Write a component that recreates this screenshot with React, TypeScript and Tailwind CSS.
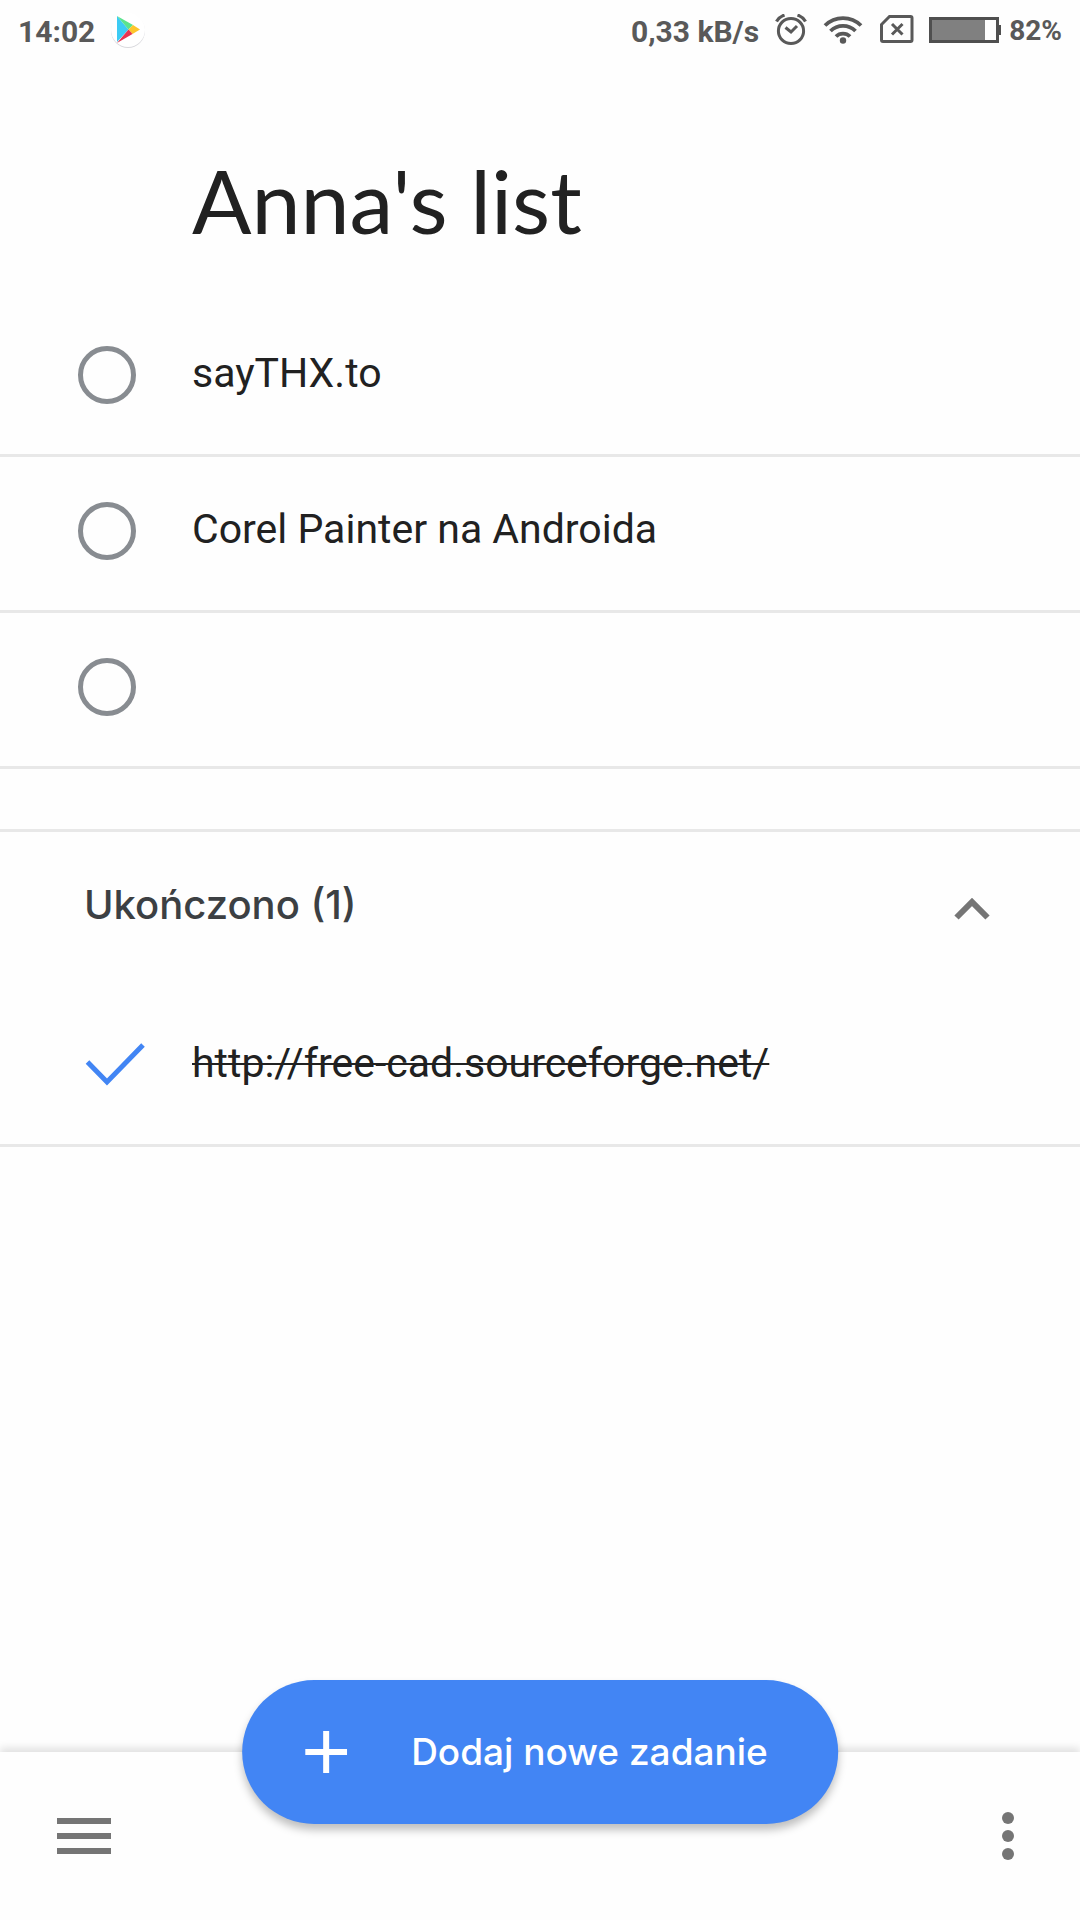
import React, { useState } from "react";

interface Task {
  id: number;
  title: string;
  done: boolean;
}

const initialTasks: Task[] = [
  { id: 1, title: "sayTHX.to", done: false },
  { id: 2, title: "Corel Painter na Androida", done: false },
  { id: 3, title: "", done: false },
  { id: 4, title: "http://free-cad.sourceforge.net/", done: true },
];

const PlayBadge = () => (
  <svg className="w-9 h-9" viewBox="0 0 36 36" aria-hidden="true">
    <circle cx="17" cy="19" r="17" fill="#d9d9dd" />
    <circle cx="17" cy="18" r="17" fill="#fff" />
    <path d="M6 4v26l11.500-12.500z" fill="#3ccbf4" />
    <path d="M6 4l16 9-4.500 4.500z" fill="#5be38d" />
    <path d="M22 13l7 4.500-7.500 4.500-4-4.500z" fill="#fdc52b" />
    <path d="M6 31l15.500-9-4-4.500z" fill="#e8344f" />
  </svg>
);

const AlarmIcon = () => (
  <svg
    className="w-8 h-8"
    viewBox="0 0 32 32"
    fill="none"
    stroke="#595959"
    aria-hidden="true"
  >
    <circle cx="16" cy="17" r="12.600" strokeWidth="3" />
    <path d="M10.500 13.500l5.500 4.500 6-6" strokeWidth="3" />
    <path d="M1.500 7.500Q4 3 9.500 1M30.500 7.500Q28 3 22.500 1" strokeWidth="3.200" />
  </svg>
);

const WifiIcon = () => (
  <svg
    className="w-10 h-8"
    viewBox="0 0 40 32"
    fill="none"
    stroke="#595959"
    strokeWidth="3.800"
    aria-hidden="true"
  >
    <path d="M2 11.500a25.500 25.500 0 0 1 36 0" />
    <path d="M7.500 17a17.700 17.700 0 0 1 25 0" />
    <path d="M13 22.500a10 10 0 0 1 14 0" />
    <circle cx="20" cy="26.500" r="3.200" fill="#595959" stroke="none" />
  </svg>
);

const NoSimIcon = () => (
  <svg
    className="w-9 h-8"
    viewBox="0 0 36 32"
    fill="none"
    stroke="#595959"
    strokeWidth="3"
    aria-hidden="true"
  >
    <path d="M10.500 2.500H31.500q1.500 0 1.500 1.500V26q0 1.500-1.500 1.500H4q-1.500 0-1.500-1.500V10.500z" />
    <path d="M13 10l10.500 10.500M23.500 10L13 20.500" />
  </svg>
);

const BatteryIcon = () => (
  <svg className="w-18 h-8" viewBox="0 0 72 32" aria-hidden="true">
    <rect x="1.500" y="4.500" width="67" height="23" fill="none" stroke="#4f4f4f" strokeWidth="3" />
    <rect x="3" y="6" width="53" height="20" fill="#808080" />
    <rect x="69" y="11" width="3" height="10" fill="#4f4f4f" />
  </svg>
);

const StatusBar = () => (
  <div className="flex items-center justify-between h-15 px-[18px] font-bold text-[#595959]">
    <div className="flex items-center gap-4">
      <span className="pt-0.5 text-[30px]">14:02</span>
      <PlayBadge />
    </div>
    <div className="flex items-center">
      <span className="pt-0.5 mr-4 text-[30px]">0,33 kB/s</span>
      <span className="flex items-center gap-4">
        <AlarmIcon />
        <WifiIcon />
        <NoSimIcon />
      </span>
      <span className="flex items-center gap-2 ml-3.5">
        <BatteryIcon />
        <span className="pt-0.5 text-[28px]">82%</span>
      </span>
    </div>
  </div>
);

const TaskRow = ({
  task,
  onToggle,
}: {
  task: Task;
  onToggle: (id: number) => void;
}) => (
  <li className="flex items-center gap-14 h-[156px] pl-[78px] pr-10 pb-1.5 border-b-3 border-[#e8e8e8]">
    <span className="grid shrink-0">
      <input
        type="checkbox"
        id={`task-${task.id}`}
        aria-label={task.title ? undefined : "Zadanie bez nazwy"}
        checked={task.done}
        onChange={() => onToggle(task.id)}
        className="appearance-none col-start-1 row-start-1 size-[58px] rounded-full border-5 border-[#888c91] checked:border-transparent cursor-pointer"
      />
      {task.done && (
        <svg
          className="col-start-1 row-start-1 size-[58px] overflow-visible pointer-events-none"
          viewBox="0 0 58 58"
          fill="none"
          stroke="#4285f4"
          strokeWidth="5"
          aria-hidden="true"
        >
          <path d="M9.500 26L29 46 65 9" />
        </svg>
      )}
    </span>
    <label
      htmlFor={`task-${task.id}`}
      className={
        task.done
          ? "pb-1 text-[41px] leading-12 line-through decoration-2"
          : "pb-1 text-[41px] leading-12"
      }
    >
      {task.title}
    </label>
  </li>
);

export default function App() {
  const [tasks, setTasks] = useState(initialTasks);
  const [open, setOpen] = useState(true);

  const toggle = (id: number) =>
    setTasks(tasks.map((t) => (t.id === id ? { ...t, done: !t.done } : t)));

  const active = tasks.filter((t) => !t.done);
  const completed = tasks.filter((t) => t.done);

  return (
    <div className="flex flex-col min-h-screen bg-[#fefefe] text-[#212121] font-['Roboto',sans-serif]">
      <StatusBar />

      <main className="flex-1">
        <h1 className="pt-[90px] pb-[51px] pl-48 text-[88px] leading-[100px] font-['Lato',sans-serif]">
          Anna's list
        </h1>
        <ul>
          {active.map((task) => (
            <TaskRow key={task.id} task={task} onToggle={toggle} />
          ))}
        </ul>

        <section className="mt-15 border-t-3 border-[#e8e8e8]">
          <button
            type="button"
            aria-expanded={open}
            onClick={() => setOpen(!open)}
            className="flex items-center justify-between w-full h-[159px] pl-[84px] pr-[90px] pb-3.5 text-[40px] font-medium text-[#3c4043] font-['Inter',sans-serif] cursor-pointer"
          >
            <span>Ukończono ({completed.length})</span>
            <svg
              className={open ? "w-9 h-9" : "w-9 h-9 rotate-180"}
              viewBox="0 0 36 36"
              fill="none"
              stroke="#757575"
              strokeWidth="6"
              aria-hidden="true"
            >
              <path d="M2.500 30.500L18 15l15.500 15.500" />
            </svg>
          </button>
          {open && (
            <ul>
              {completed.map((task) => (
                <TaskRow key={task.id} task={task} onToggle={toggle} />
              ))}
            </ul>
          )}
        </section>
      </main>

      <footer className="sticky bottom-0 flex items-center justify-between h-42 px-[57px] bg-[#fefefe] shadow-[0_-4px_8px_rgba(0,0,0,0.12)]">
        <button type="button" aria-label="Menu" className="cursor-pointer">
          <svg className="w-[54px] h-9" viewBox="0 0 54 36" fill="#757575">
            <path d="M0 0h54v6H0zM0 15h54v6H0zM0 30h54v6H0z" />
          </svg>
        </button>
        <button
          type="button"
          className="absolute left-1/2 -top-18 -translate-x-1/2 flex items-center gap-16 h-36 pl-[63px] pr-[70px] rounded-full bg-[#4285f4] text-white text-[37px] font-medium whitespace-nowrap font-['Inter',sans-serif] shadow-[0_6px_8px_rgba(0,0,0,0.25)] cursor-pointer"
        >
          <svg className="size-[42px]" viewBox="0 0 42 42" fill="#fff" aria-hidden="true">
            <path d="M18 0h6v18h18v6H24v18h-6V24H0v-6h18z" />
          </svg>
          Dodaj nowe zadanie
        </button>
        <button type="button" aria-label="Więcej opcji" className="w-[30px] flex justify-center cursor-pointer">
          <svg className="w-3 h-12" viewBox="0 0 12 48" fill="#757575">
            <circle cx="6" cy="6" r="6" />
            <circle cx="6" cy="24" r="6" />
            <circle cx="6" cy="42" r="6" />
          </svg>
        </button>
      </footer>
    </div>
  );
}
